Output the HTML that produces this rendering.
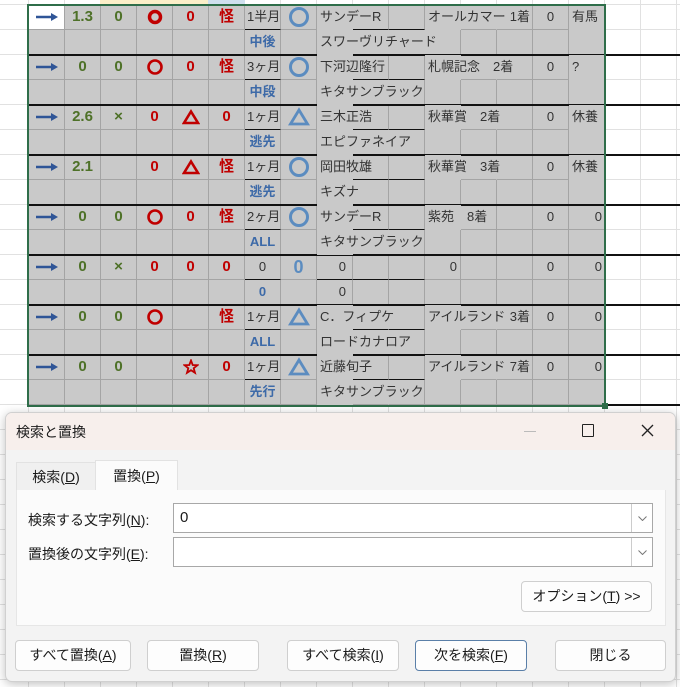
<!DOCTYPE html>
<html><head><meta charset="utf-8"><style>
*{box-sizing:border-box;margin:0;padding:0}
body{width:680px;height:687px;overflow:hidden;position:relative;background:#fff;font-family:"Liberation Sans","Noto Sans CJK JP",sans-serif;}
.sheet{position:absolute;left:0;top:0;width:680px;height:687px;
background-image:repeating-linear-gradient(90deg,transparent 0 27px,#e1e1e1 27px 28px,transparent 28px 36px),repeating-linear-gradient(180deg,transparent 0 4px,#e1e1e1 4px 5px,transparent 5px 25px);background-position:1px 0,0 0}
.r{position:absolute;left:29px;display:flex;height:25px}
.r>div{width:36px;height:25px;flex:none;background:#c9c9c9;border-right:1px solid #a4a4a4;border-bottom:1px solid #a4a4a4;text-align:center;line-height:24px;font-size:13px;white-space:nowrap;color:#333;overflow:visible;position:relative}
.r>div.n{border-right-color:#c9c9c9}
.r>div.t{text-align:left;padding-left:3px;z-index:3;background:transparent}
.r>div.n{background:transparent}
.r>div.t::before,.r>div.n::before{content:"";position:absolute;inset:0 -1px -1px 0;background:#c9c9c9;z-index:-1}
.g{color:#4e7128!important;font-weight:bold;font-size:15px!important}
.rd{color:#c00000!important;font-weight:bold;font-size:15px!important}
.bl{color:#3d6aa8!important;font-weight:bold}
.rt{text-align:right!important;padding-right:2px}
.ul{border-bottom:1.5px solid #111!important}
.bk{position:absolute;height:2px;background:#111;left:28px;width:652px}
svg.i{position:absolute;left:50%;top:50%;transform:translate(-50%,-50%)}
.dlg{position:absolute;left:5px;top:412px;width:671px;height:270px;background:#f3f3f3;border:1px solid #d0d0d0;border-radius:7px;box-shadow:0 2px 10px rgba(0,0,0,.25);overflow:hidden;font-size:14px;color:#1a1a1a}
.tb{position:absolute;left:0;top:0;width:100%;height:37px;background:#f7efec}
.btn{position:absolute;height:31px;background:#fdfdfd;border:1px solid #cfcfcf;border-radius:4px;text-align:center;line-height:29px;font-size:14px}
.in{position:absolute;left:167px;width:480px;height:30px;background:#fff;border:1px solid #a8a8a8}
.in .dd{position:absolute;right:0;top:0;width:21px;height:28px;border-left:1px solid #ccc}
u{text-decoration:underline}
</style></head><body>
<svg width="0" height="0" style="position:absolute"><defs>
<symbol id="ar" viewBox="0 0 24 10"><path d="M1 5 H18" stroke="#2f5597" stroke-width="2.6"/><path d="M16 1 L23 5 L16 9 Z" fill="#2f5597"/></symbol>
<symbol id="cb" viewBox="0 0 22 22"><circle cx="11" cy="11" r="8.5" fill="none" stroke="#5b8cc0" stroke-width="3"/></symbol>
<symbol id="tb" viewBox="0 0 22 20"><path d="M11 3 L19.5 17 L2.5 17 Z" fill="none" stroke="#5b8cc0" stroke-width="2.8"/></symbol>
<symbol id="cr" viewBox="0 0 18 18"><circle cx="9" cy="9" r="6.5" fill="none" stroke="#c00000" stroke-width="2.6"/></symbol>
<symbol id="tr" viewBox="0 0 18 16"><path d="M9 2.5 L16 14 L2 14 Z" fill="none" stroke="#c00000" stroke-width="2.6"/></symbol>
</defs></svg>
<div class="sheet"></div>
<div style="position:absolute;left:100px;top:0;width:108px;height:5px;background:#fbefc8"></div>
<div style="position:absolute;left:208px;top:0;width:37px;height:5px;background:#cfe0ee"></div>

<!-- R1 -->
<div class="r" style="top:5px"><div style="background:#fff"><svg class="i" width="24" height="10"><use href="#ar"/></svg></div><div class="g">1.3</div><div class="g">0</div><div><svg class="i" width="16" height="16"><circle cx="8" cy="8" r="5.5" fill="none" stroke="#c00000" stroke-width="3.5"/></svg></div><div class="rd">0</div><div class="rd">怪</div><div class="ul" style="text-align:left;padding-left:2px">1半月</div><div><svg class="i" width="22" height="22"><use href="#cb"/></svg></div><div class="t ul n">サンデーR</div><div class="ul"></div><div class="ul"></div><div class="t n">オールカマー</div><div class="n"></div><div class="rt" style="overflow:hidden">1着</div><div>0</div><div class="t">有馬</div></div>
<div class="r" style="top:30px"><div></div><div></div><div></div><div></div><div></div><div></div><div class="bl">中後</div><div></div><div class="t n">スワーヴリチャード</div><div class="n"></div><div class="n"></div><div></div><div></div><div></div><div></div><div></div></div>

<!-- R2 -->
<div class="r" style="top:55px"><div><svg class="i" width="24" height="10"><use href="#ar"/></svg></div><div class="g">0</div><div class="g">0</div><div><svg class="i" width="18" height="18"><use href="#cr"/></svg></div><div class="rd">0</div><div class="rd">怪</div><div class="ul" style="text-align:left;padding-left:2px">3ヶ月</div><div><svg class="i" width="22" height="22"><use href="#cb"/></svg></div><div class="t ul n">下河辺隆行</div><div class="ul"></div><div class="ul"></div><div class="t n">札幌記念　2着</div><div class="n"></div><div></div><div>0</div><div class="t">?</div></div>
<div class="r" style="top:80px"><div></div><div></div><div></div><div></div><div></div><div></div><div class="bl">中段</div><div></div><div class="t n">キタサンブラック</div><div class="n"></div><div></div><div></div><div></div><div></div><div></div><div></div></div>

<!-- R3 -->
<div class="r" style="top:105px"><div><svg class="i" width="24" height="10"><use href="#ar"/></svg></div><div class="g">2.6</div><div class="g">×</div><div class="rd">0</div><div><svg class="i" width="18" height="16"><use href="#tr"/></svg></div><div class="rd">0</div><div class="ul" style="text-align:left;padding-left:2px">1ヶ月</div><div><svg class="i" width="22" height="20"><use href="#tb"/></svg></div><div class="t ul n">三木正浩</div><div class="ul"></div><div class="ul"></div><div class="t n">秋華賞　2着</div><div class="n"></div><div></div><div>0</div><div class="t">休養</div></div>
<div class="r" style="top:130px"><div></div><div></div><div></div><div></div><div></div><div></div><div class="bl">逃先</div><div></div><div class="t n">エピファネイア</div><div class="n"></div><div></div><div></div><div></div><div></div><div></div><div></div></div>

<!-- R4 -->
<div class="r" style="top:155px"><div><svg class="i" width="24" height="10"><use href="#ar"/></svg></div><div class="g">2.1</div><div></div><div class="rd">0</div><div><svg class="i" width="18" height="16"><use href="#tr"/></svg></div><div class="rd">怪</div><div class="ul" style="text-align:left;padding-left:2px">1ヶ月</div><div><svg class="i" width="22" height="22"><use href="#cb"/></svg></div><div class="t ul n">岡田牧雄</div><div class="ul"></div><div class="ul"></div><div class="t n">秋華賞　3着</div><div class="n"></div><div></div><div>0</div><div class="t">休養</div></div>
<div class="r" style="top:180px"><div></div><div></div><div></div><div></div><div></div><div></div><div class="bl">逃先</div><div></div><div class="t">キズナ</div><div></div><div></div><div></div><div></div><div></div><div></div><div></div></div>

<!-- R5 -->
<div class="r" style="top:205px"><div><svg class="i" width="24" height="10"><use href="#ar"/></svg></div><div class="g">0</div><div class="g">0</div><div><svg class="i" width="18" height="18"><use href="#cr"/></svg></div><div class="rd">0</div><div class="rd">怪</div><div class="ul" style="text-align:left;padding-left:2px">2ヶ月</div><div><svg class="i" width="22" height="22"><use href="#cb"/></svg></div><div class="t ul n">サンデーR</div><div class="ul"></div><div class="ul"></div><div class="t n">紫苑　8着</div><div></div><div></div><div>0</div><div class="rt">0</div></div>
<div class="r" style="top:230px"><div></div><div></div><div></div><div></div><div></div><div></div><div class="bl">ALL</div><div></div><div class="t n">キタサンブラック</div><div class="n"></div><div></div><div></div><div></div><div></div><div></div><div></div></div>

<!-- R6 -->
<div class="r" style="top:255px"><div><svg class="i" width="24" height="10"><use href="#ar"/></svg></div><div class="g">0</div><div class="g">×</div><div class="rd">0</div><div class="rd">0</div><div class="rd">0</div><div class="ul">0</div><div style="color:#5b8cc0;font-weight:bold;font-size:18px">0</div><div class="ul rt" style="padding-right:6px">0</div><div class="ul"></div><div class="ul"></div><div class="rt" style="padding-right:3px">0</div><div></div><div></div><div>0</div><div class="rt">0</div></div>
<div class="r" style="top:280px"><div></div><div></div><div></div><div></div><div></div><div></div><div class="bl">0</div><div></div><div class="rt" style="padding-right:6px">0</div><div></div><div></div><div></div><div></div><div></div><div></div><div></div></div>

<!-- R7 -->
<div class="r" style="top:305px"><div><svg class="i" width="24" height="10"><use href="#ar"/></svg></div><div class="g">0</div><div class="g">0</div><div><svg class="i" width="18" height="18"><use href="#cr"/></svg></div><div></div><div class="rd">怪</div><div class="ul" style="text-align:left;padding-left:2px">1ヶ月</div><div><svg class="i" width="22" height="20"><use href="#tb"/></svg></div><div class="t ul n">C．フィプケ</div><div class="ul n"></div><div class="ul"></div><div class="t n">アイルランド</div><div class="n"></div><div class="rt" style="overflow:hidden">3着</div><div>0</div><div class="rt">0</div></div>
<div class="r" style="top:330px"><div></div><div></div><div></div><div></div><div></div><div></div><div class="bl">ALL</div><div></div><div class="t n">ロードカナロア</div><div class="n"></div><div></div><div></div><div></div><div></div><div></div><div></div></div>

<!-- R8 -->
<div class="r" style="top:355px"><div><svg class="i" width="24" height="10"><use href="#ar"/></svg></div><div class="g">0</div><div class="g">0</div><div></div><div><svg class="i" width="16" height="16"><path d="M8 1.5 L9.7 6 L14.5 6.2 L10.7 9.2 L12 13.8 L8 11.2 L4 13.8 L5.3 9.2 L1.5 6.2 L6.3 6 Z" fill="none" stroke="#c00000" stroke-width="1.8"/></svg></div><div class="rd">0</div><div class="ul" style="text-align:left;padding-left:2px">1ヶ月</div><div><svg class="i" width="22" height="20"><use href="#tb"/></svg></div><div class="t ul n">近藤旬子</div><div class="ul"></div><div class="ul"></div><div class="t n">アイルランド</div><div class="n"></div><div class="rt" style="overflow:hidden">7着</div><div>0</div><div class="rt">0</div></div>
<div class="r" style="top:380px"><div></div><div></div><div></div><div></div><div></div><div></div><div class="bl">先行</div><div></div><div class="t n">キタサンブラック</div><div class="n"></div><div></div><div></div><div></div><div></div><div></div><div></div></div>

<div class="bk" style="top:54px"></div><div class="bk" style="top:104px"></div><div class="bk" style="top:154px"></div><div class="bk" style="top:204px"></div><div class="bk" style="top:254px"></div><div class="bk" style="top:304px"></div><div class="bk" style="top:354px"></div><div class="bk" style="top:404px;left:605px;width:75px"></div>
<div style="position:absolute;left:27px;top:4px;width:579px;height:403px;border:2px solid #2f6e4a;z-index:5"></div>
<div style="position:absolute;left:602px;top:403px;width:6px;height:6px;background:#2f6e4a;z-index:5"></div>

<div class="dlg" style="z-index:10">
<div class="tb"></div>
<div style="position:absolute;left:10px;top:9px;font-size:14px">検索と置換</div>
<div style="position:absolute;left:518px;top:18px;width:12px;height:1px;background:#bbb"></div>
<div style="position:absolute;left:576px;top:11px;width:12px;height:13px;border:1.5px solid #222;border-radius:1px"></div>
<svg style="position:absolute;left:635px;top:11px" width="13" height="13"><path d="M1 1 L12 12 M12 1 L1 12" stroke="#222" stroke-width="1.3"/></svg>
<div style="position:absolute;left:10px;top:49px;width:80px;height:29px;background:#f0f0f0;border:1px solid #e2e2e2;border-bottom:none;line-height:28px;text-align:center">検索(<u>D</u>)</div>
<div style="position:absolute;left:89px;top:47px;width:83px;height:32px;background:#fbfbfb;border:1px solid #e2e2e2;border-bottom:none;line-height:30px;text-align:center">置換(<u>P</u>)</div>
<div style="position:absolute;left:10px;top:77px;width:650px;height:136px;background:#fbfbfb;border:1px solid #e6e6e6;border-top:none"></div>
<div style="position:absolute;left:22px;top:97px">検索する文字列(<u>N</u>):</div>
<div style="position:absolute;left:22px;top:131px">置換後の文字列(<u>E</u>):</div>
<div class="in" style="top:90px"><span style="position:absolute;left:6px;top:5px;font-size:15px">0</span><div class="dd"><svg style="position:absolute;left:6px;top:12px" width="9" height="5"><path d="M0.5 0.5 L4.5 4.5 L8.5 0.5" fill="none" stroke="#777" stroke-width="1"/></svg></div></div>
<div class="in" style="top:124px"><div class="dd"><svg style="position:absolute;left:6px;top:12px" width="9" height="5"><path d="M0.5 0.5 L4.5 4.5 L8.5 0.5" fill="none" stroke="#777" stroke-width="1"/></svg></div></div>
<div class="btn" style="left:515px;top:168px;width:131px">オプション(<u>T</u>) &gt;&gt;</div>
<div class="btn" style="left:9px;top:227px;width:116px">すべて置換(<u>A</u>)</div>
<div class="btn" style="left:141px;top:227px;width:112px">置換(<u>R</u>)</div>
<div class="btn" style="left:281px;top:227px;width:112px">すべて検索(<u>I</u>)</div>
<div class="btn" style="left:409px;top:227px;width:112px;border-color:#5a7fa8">次を検索(<u>F</u>)</div>
<div class="btn" style="left:549px;top:227px;width:111px">閉じる</div>
</div>
</body></html>
